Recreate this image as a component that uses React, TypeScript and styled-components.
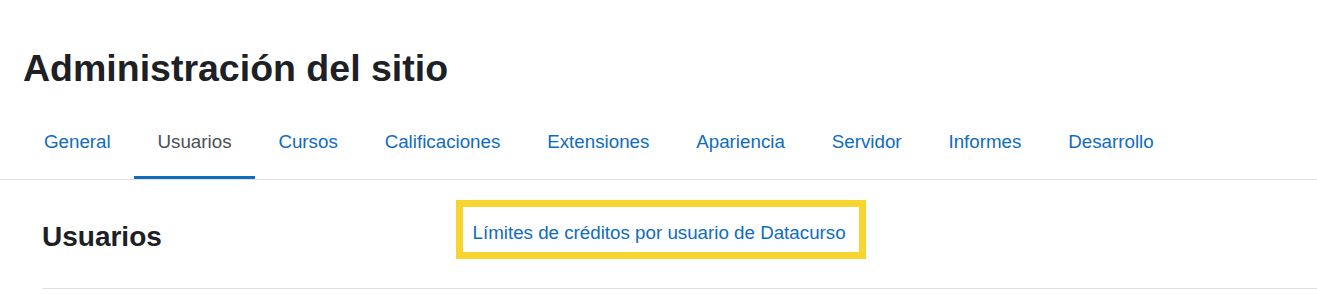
import { FC } from "react";
import styled, { createGlobalStyle } from "styled-components";

const GlobalStyle = createGlobalStyle`
  html, body {
    margin: 0;
    padding: 0;
    background: #ffffff;
  }
  body {
    font-family: "Liberation Sans", Arial, sans-serif;
    color: #1d2125;
  }
`;

const Page = styled.div`
  width: 1317px;
  height: 295px;
  overflow: hidden;
  background: #ffffff;
`;

const PageHeader = styled.header`
  padding: 46px 0 0 23px;
`;

const Title = styled.h2`
  margin: 0;
  font-size: 37.5px;
  line-height: 45px;
  font-weight: 700;
  color: #1d2125;
`;

const TabList = styled.ul`
  list-style: none;
  margin: 23px 0 0;
  padding: 0 0 0 20.5px;
  display: flex;
  border-bottom: 1px solid #dee2e6;
`;

const TabLink = styled.a<{ $active?: boolean }>`
  display: block;
  padding: 13.5px 23.45px 20.5px;
  font-size: 18.75px;
  line-height: 28px;
  text-decoration: none;
  color: ${(p) => (p.$active ? "#4a4f55" : "#0f6cbf")};
  border-bottom: 3px solid ${(p) => (p.$active ? "#0f6cbf" : "transparent")};
  cursor: pointer;
`;

const CategoryRow = styled.section`
  margin-left: 42px;
  display: grid;
  grid-template-columns: 414px 1fr;
  align-items: start;
  padding: 20px 0 29px;
  border-bottom: 1px solid #dee2e6;
`;

const CategoryTitle = styled.h4`
  margin: 20px 0 0;
  font-size: 28px;
  line-height: 34px;
  font-weight: 700;
  color: #1d2125;
`;

const LinkList = styled.ul`
  list-style: none;
  margin: 0;
  padding: 0;
`;

const Highlight = styled.li`
  display: inline-block;
  border: 7.5px solid #f8d430;
  padding: 12px 13px 4.5px 9.5px;
`;

const SettingLink = styled.a`
  font-size: 18.75px;
  line-height: 28px;
  color: #0f6cbf;
  text-decoration: none;
`;

const tabs = [
  "General",
  "Usuarios",
  "Cursos",
  "Calificaciones",
  "Extensiones",
  "Apariencia",
  "Servidor",
  "Informes",
  "Desarrollo",
];

const App: FC = () => {
  return (
    <Page>
      <GlobalStyle />
      <PageHeader>
        <Title>Administración del sitio</Title>
      </PageHeader>
      <TabList>
        {tabs.map((tab) => (
          <li key={tab}>
            <TabLink $active={tab === "Usuarios"}>{tab}</TabLink>
          </li>
        ))}
      </TabList>
      <CategoryRow>
        <CategoryTitle>Usuarios</CategoryTitle>
        <LinkList>
          <Highlight>
            <SettingLink>Límites de créditos por usuario de Datacurso</SettingLink>
          </Highlight>
        </LinkList>
      </CategoryRow>
    </Page>
  );
};

export default App;
